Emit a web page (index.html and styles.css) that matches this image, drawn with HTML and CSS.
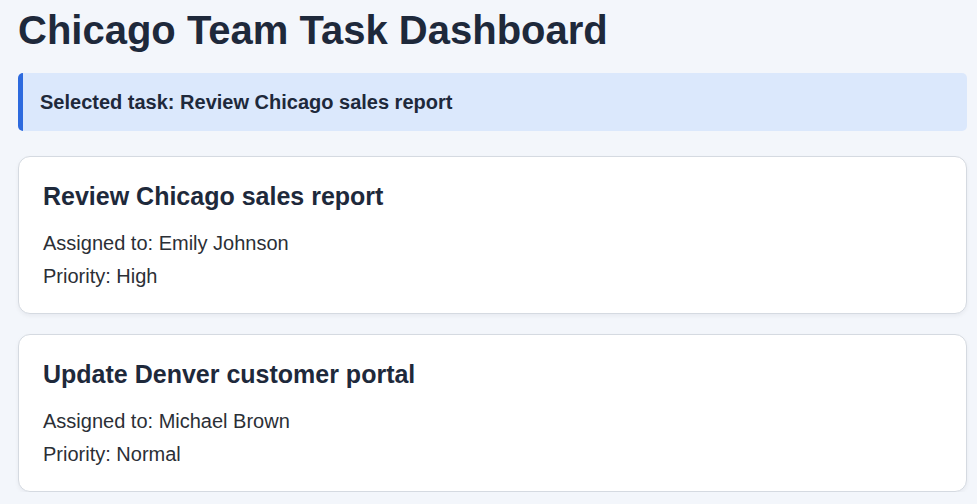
FILE: index.html
```html
<!DOCTYPE html>
<html>

<head>
    <meta charset="UTF-8">
    <title>Chicago Team Task Dashboard</title>
    <link rel="stylesheet" href="styles.css">
</head>

<body>
    <div class="page">
        <h1 class="title">Chicago Team Task Dashboard</h1>

        <div class="selected">Selected task: Review Chicago sales report</div>

        <div class="tasks">
            <div class="task">
                <h2>Review Chicago sales report</h2>
                <div class="meta">
                    <p>Assigned to: Emily Johnson</p>
                    <p>Priority: High</p>
                </div>
            </div>
            <div class="task">
                <h2>Update Denver customer portal</h2>
                <div class="meta">
                    <p>Assigned to: Michael Brown</p>
                    <p>Priority: Normal</p>
                </div>
            </div>
        </div>
    </div>
</body>

</html>
```

FILE: styles.css
```css
* {
    margin: 0;
    padding: 0;
    box-sizing: border-box;
}

body {
    background: #f3f6fb;
    font-family: "Liberation Sans", Arial, sans-serif;
    color: #1f2937;
}

.page {
    padding: 8px 10px 0 18px;
}

.title {
    font-size: 40px;
    font-weight: bold;
    color: #1e293b;
    margin-bottom: 20px;
}

.selected {
    background: #dbe8fc;
    border-left: 5px solid #2d6ade;
    border-radius: 5px;
    padding: 18px 17px 17px;
    font-size: 20px;
    font-weight: bold;
    color: #1e293b;
    margin-bottom: 25px;
}

.tasks {
    display: flex;
    flex-direction: column;
    gap: 20px;
}

.task {
    background: #fff;
    border: 1px solid #d5dae1;
    border-radius: 12px;
    padding: 25px 24px;
    box-shadow: 0 2px 4px rgba(15, 23, 42, 0.05);
}

.task h2 {
    font-size: 25px;
    font-weight: bold;
    color: #1e293b;
    margin-bottom: 21px;
}

.meta {
    display: flex;
    flex-direction: column;
    gap: 10px;
}

.meta p {
    font-size: 20px;
    color: #2b2f36;
}
```
